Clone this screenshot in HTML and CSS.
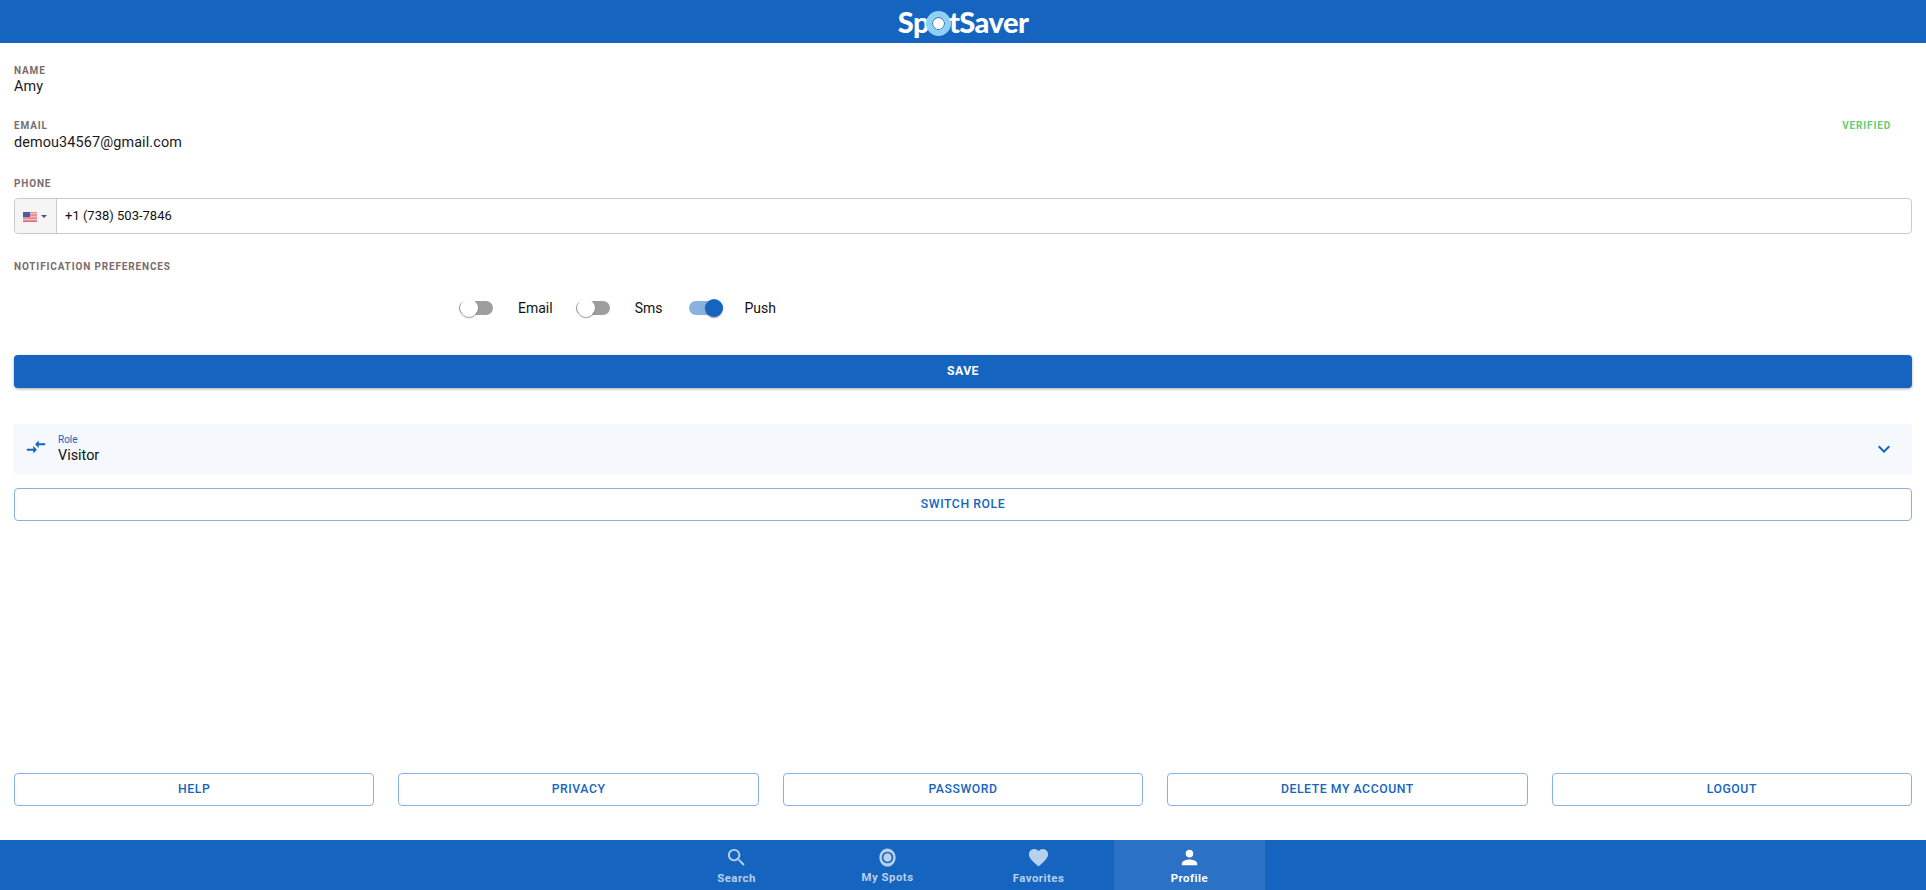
FILE: index.html
```html
<!DOCTYPE html>
<html lang="en">
<head>
<meta charset="UTF-8">
<meta name="viewport" content="width=device-width, initial-scale=1.0">
<title>SpotSaver - Profile</title>
<link rel="stylesheet" href="styles.css">
</head>
<body>
<!-- Header -->
<header class="topbar">
    <div class="logo">Sp<span class="logo-ring"></span>tSaver</div>
</header>

<main class="content">
    <div class="field field-name">
        <div class="label">Name</div>
        <div class="value">Amy</div>
    </div>
    <div class="field field-email">
        <div class="label-row">
            <div class="label">Email</div>
            <div class="verified">Verified</div>
        </div>
        <div class="value">demou34567@gmail.com</div>
    </div>

    <div class="label label-phone">Phone</div>
    <div class="phone">
        <div class="phone-flag">
            <svg class="flag" viewBox="0 0 14 10" width="14" height="10">
                <rect width="14" height="10" fill="#fff"/>
                <path d="M0 .75h14M0 2.25h14M0 3.75h14M0 5.25h14M0 6.75h14M0 8.25h14M0 9.5h14" stroke="#d9535b" stroke-width=".85"/>
                <rect width="7" height="5" fill="#4a5fa8"/>
            </svg>
            <span class="caret"></span>
        </div>
        <div class="phone-number">+1 (738) 503-7846</div>
    </div>

    <div class="label label-notify">Notification Preferences</div>
    <div class="switches">
        <label class="switch-item">
            <span class="switch"><span class="track"></span><span class="thumb"></span></span>
            <span class="switch-text">Email</span>
        </label>
        <label class="switch-item item-sms">
            <span class="switch"><span class="track"></span><span class="thumb"></span></span>
            <span class="switch-text">Sms</span>
        </label>
        <label class="switch-item item-push">
            <span class="switch on"><span class="track"></span><span class="thumb"></span></span>
            <span class="switch-text">Push</span>
        </label>
    </div>

    <button type="button" class="btn-save">Save</button>

    <!-- Role select -->
    <div class="role">
        <svg class="role-icon" viewBox="0 0 24 24" width="24" height="24"><path d="M9.01 14H2v2h7.01v3L13 15l-3.99-4v3zm5.98-1v-3H22V8h-7.01V5L11 9l3.99 4z"/></svg>
        <div class="role-text">
            <div class="role-label">Role</div>
            <div class="role-value">Visitor</div>
        </div>
        <svg class="role-arrow" viewBox="0 0 24 24" width="24" height="24"><path d="M16.59 8.59 12 13.17 7.41 8.59 6 10l6 6 6-6z"/></svg>
    </div>
    <button type="button" class="btn-outline btn-switch">Switch Role</button>

    <div class="actions">
        <button type="button" class="btn-outline">Help</button>
        <button type="button" class="btn-outline">Privacy</button>
        <button type="button" class="btn-outline">Password</button>
        <button type="button" class="btn-outline">Delete my account</button>
        <button type="button" class="btn-outline">Logout</button>
    </div>
</main>

<!-- Bottom navigation -->
<nav class="bottomnav">
    <a class="tab">
        <svg viewBox="0 0 24 24" width="24" height="24"><path d="M15.5 14h-.79l-.28-.27C15.41 12.59 16 11.11 16 9.5 16 5.91 13.09 3 9.5 3S3 5.91 3 9.5 5.91 16 9.5 16c1.61 0 3.09-.59 4.23-1.57l.27.28v.79l5 4.99L20.49 19l-4.99-5zm-6 0C7.01 14 5 11.99 5 9.5S7.01 5 9.5 5 14 7.01 14 9.5 11.99 14 9.5 14z"/></svg>
        <span>Search</span>
    </a>
    <a class="tab tab-spots">
        <svg viewBox="0 0 24 24" width="24" height="24"><path fill-rule="evenodd" d="M12 2.500c-4.600 0-8.500 4.200-8.500 9.500s3.900 9.500 8.500 9.500 8.500-4.200 8.500-9.500-3.900-9.500-8.500-9.500zm0 3.400a6 6.100 0 1 1 0 12.200 6 6.100 0 0 1 0-12.200z"/><ellipse cx="12" cy="12" rx="4.300" ry="4.500"/></svg>
        <span>My Spots</span>
    </a>
    <a class="tab">
        <svg viewBox="0 0 24 24" width="24" height="24"><path d="M12 21.35l-1.45-1.32C5.4 15.36 2 12.28 2 8.5 2 5.42 4.42 3 7.5 3c1.74 0 3.41.81 4.5 2.09C13.09 3.81 14.76 3 16.5 3 19.58 3 22 5.42 22 8.5c0 3.78-3.4 6.86-8.55 11.54L12 21.35z"/></svg>
        <span>Favorites</span>
    </a>
    <a class="tab tab-active">
        <svg viewBox="0 0 24 24" width="24" height="24"><path d="M12 12c2.21 0 4-1.79 4-4s-1.79-4-4-4-4 1.79-4 4 1.79 4 4 4zm0 2c-2.67 0-8 1.34-8 4v2h16v-2c0-2.66-5.33-4-8-4z"/></svg>
        <span>Profile</span>
    </a>
</nav>
</body>
</html>
```

FILE: styles.css
```css
* {
    box-sizing: border-box;
}
body {
    font-family: Roboto, Arial, sans-serif;
    margin: 0;
    padding: 0;
    height: 890px;
    display: flex;
    flex-direction: column;
    background-color: #fff;
    color: #1a1a1a;
    overflow: hidden;
}
.topbar {
    height: 43px;
    background-color: #1565c0;
    display: flex;
    justify-content: center;
    align-items: center;
}
.logo {
    font-family: Lato, Arial, sans-serif;
    font-weight: 900;
    font-size: 29px;
    line-height: 43px;
    letter-spacing: -.55px;
    color: #fff;
    display: flex;
    align-items: center;
}
.logo-ring {
    width: 25px;
    height: 25px;
    margin: 4px -2px 0 -3px;
    border-radius: 50%;
    border: 6px solid #90d0f5;
    background-color: #fff;
    box-shadow: inset 0 0 0 1px #1565c0;
}
.content {
    flex: 1;
    display: flex;
    flex-direction: column;
    padding: 22px 14px 34px;
}
.label {
    font-size: 10px;
    line-height: 12px;
    font-weight: 700;
    letter-spacing: .85px;
    text-transform: uppercase;
    color: #7a6c6c;
}
.value {
    font-size: 14.4px;
    line-height: 20px;
    letter-spacing: .12px;
}
.field-email {
    margin-top: 23px;
}
.field-email .value {
    margin-top: 1px;
}
.label-row {
    display: flex;
    justify-content: space-between;
}
.verified {
    font-size: 10px;
    line-height: 12px;
    font-weight: 700;
    letter-spacing: .85px;
    text-transform: uppercase;
    color: #66cc77;
    margin-right: 21px;
}
.label-phone {
    margin-top: 25px;
}
.phone {
    margin-top: 8px;
    height: 36px;
    display: flex;
    border: 1px solid #cacaca;
    border-radius: 4px;
}
.phone-flag {
    width: 42px;
    background-color: #f5f5f5;
    border-right: 1px solid #cacaca;
    border-radius: 3px 0 0 3px;
    display: flex;
    align-items: center;
    padding-left: 8px;
}
.flag {
    margin-top: 1px;
}
.caret {
    margin-left: 4px;
    border-left: 3px solid transparent;
    border-right: 3px solid transparent;
    border-top: 3px solid #555;
}
.phone-number {
    font-size: 13px;
    line-height: 34px;
    padding-left: 8px;
    color: #111;
}
.label-notify {
    margin-top: 27px;
}
.switches {
    display: flex;
    margin-top: 16px;
    padding-left: 433px;
}
.switch-item {
    display: flex;
    align-items: center;
    margin-right: 11px;
}
.item-sms {
    margin-right: 14px;
}
.item-push .switch {
    margin-right: 10px;
}
.switch {
    position: relative;
    display: block;
    width: 58px;
    height: 38px;
    margin-right: 13px;
}
.track {
    position: absolute;
    left: 12px;
    top: 12px;
    width: 34px;
    height: 14px;
    border-radius: 7px;
    background-color: #9e9e9e;
}
.thumb {
    position: absolute;
    left: 13px;
    top: 10px;
    width: 18px;
    height: 18px;
    border-radius: 50%;
    background-color: #fff;
    box-shadow: 0 2px 1px -1px rgba(0,0,0,.2), 0 1px 1px rgba(0,0,0,.14), 0 1px 3px rgba(0,0,0,.12);
}
.switch.on .track {
    background-color: #8ab2e0;
}
.switch.on .thumb {
    left: 28px;
    background-color: #1565c0;
}
.switch-text {
    font-size: 14px;
    line-height: 20px;
    color: #111;
}
.btn-save {
    margin-top: 28px;
    height: 33px;
    width: 100%;
    padding-bottom: 2px;
    border: none;
    border-radius: 4px;
    background-color: #1565c0;
    color: #fff;
    font-family: inherit;
    font-size: 12.25px;
    font-weight: 700;
    letter-spacing: .4px;
    text-transform: uppercase;
    box-shadow: 0 1px 3px rgba(0,0,0,.35);
}
.role {
    margin-top: 36px;
    height: 50px;
    background-color: #f5f8fd;
    display: flex;
    align-items: center;
    padding: 0 16px 0 11px;
}
.role-icon {
    fill: #1565c0;
    margin-top: -4px;
    width: 22px;
    height: 22px;
}
.role-text {
    margin-left: 11px;
    flex: 1;
}
.role-label {
    font-size: 10px;
    line-height: 11px;
    color: #1565c0;
}
.role-value {
    font-size: 14.4px;
    line-height: 18px;
    margin-top: 2px;
    color: #111;
}
.role-arrow {
    fill: #1565c0;
}
.btn-outline {
    height: 33px;
    width: 100%;
    padding-bottom: 2px;
    background-color: #fff;
    border: 1px solid #8ab2e0;
    border-radius: 4px;
    color: #1565c0;
    font-family: inherit;
    font-size: 12.25px;
    font-weight: 500;
    letter-spacing: .55px;
    text-transform: uppercase;
}
.btn-switch {
    margin-top: 14px;
}
.actions {
    margin-top: auto;
    display: grid;
    grid-template-columns: repeat(5, 1fr);
    gap: 24px;
}
.bottomnav {
    height: 50px;
    background-color: #1565c0;
    display: flex;
    justify-content: center;
}
.tab {
    width: 151px;
    display: flex;
    flex-direction: column;
    align-items: center;
    color: #b9d0ec;
    fill: #b9d0ec;
    font-size: 11.4px;
    font-weight: 700;
    letter-spacing: .5px;
    padding-top: 6px;
}
.tab svg {
    width: 23px;
    height: 23px;
}
.tab span {
    line-height: 14px;
    margin-top: 2px;
}
.tab-spots span {
    margin-top: 1px;
}
.tab-active {
    background-color: #2b72c6;
    color: #fff;
    fill: #fff;
}
```
